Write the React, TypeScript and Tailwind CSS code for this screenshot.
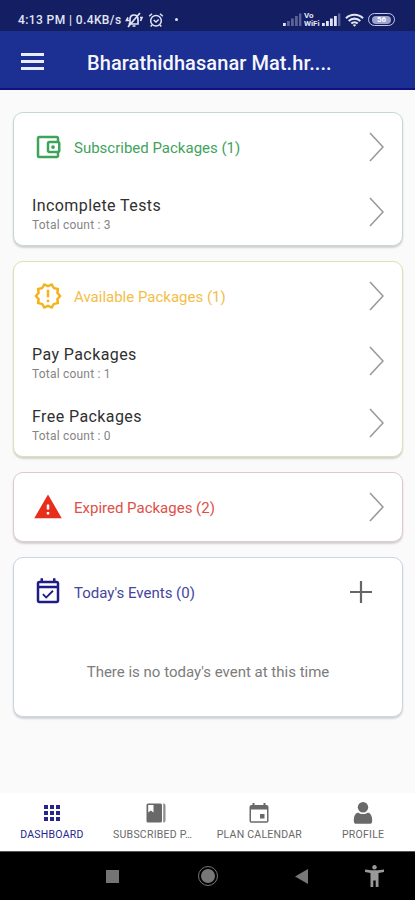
// src/App.tsx
import type { ReactNode } from 'react'
import {
  MdOutlineAccountBalanceWallet,
  MdOutlineNewReleases,
  MdWarning,
  MdOutlineEventAvailable,
} from 'react-icons/md'
import { clsx } from 'clsx'

function Chevron() {
  return (
    <svg className="h-[30px] w-[16px] shrink-0" viewBox="0 0 16 30" fill="none" stroke="#999999" strokeWidth="1.6">
      <path d="M2 1 15 15 2 29" />
    </svg>
  )
}

function Signal({ bars }: { bars: number }) {
  return (
    <svg className="h-[13px] w-[19px]" viewBox="0 0 19 13" fill="#dfe3f5">
      <rect x="0" y="10" width="2.8" height="3" />
      <rect x="4" y="8" width="2.8" height="5" opacity={bars > 1 ? 1 : 0.35} />
      <rect x="8" y="5.5" width="2.8" height="7.5" opacity={bars > 2 ? 1 : 0.35} />
      <rect x="12" y="3" width="2.8" height="10" opacity={bars > 3 ? 1 : 0.35} />
      <rect x="16" y="0.5" width="2.4" height="12.5" opacity="0.35" />
    </svg>
  )
}

function StatusBar() {
  return (
    <div className="flex h-[31px] shrink-0 items-center bg-[#141f63] pt-[8px] pl-[18px] text-[#e1e5f6]">
      <span className="w-[107px] whitespace-nowrap text-[12px] font-medium tracking-[0.4px]">4:13 PM | 0.4KB/s</span>
      {/* muted bell */}
      <svg className="h-[16px] w-[18px]" viewBox="0 0 18 16" fill="none" stroke="currentColor" strokeWidth="1.7">
        <path d="M5 12V7.500C5 4.500 6.500 3 9 3s4 1.500 4 4.500V12H3.500M7.500 14h3M15 1 3 15M3 5.500 1.500 8.500H4M15 5.500h2L15.500 9" />
      </svg>
      {/* alarm */}
      <svg className="ml-[5px] h-[16px] w-[16px]" viewBox="0 0 16 16" fill="none" stroke="currentColor" strokeWidth="1.5">
        <circle cx="8" cy="8.700" r="5.300" />
        <path d="m5.700 8 2.300 2 2.700-2.500M1.200 4.200 4 1.700M14.800 4.200 12 1.700M4 13l-1.300 1.500M12 13l1.300 1.500" />
      </svg>
      <span className="ml-[11px] h-[3px] w-[3px] rounded-full bg-current" />
      <div className="ml-auto flex items-center pr-[20px]">
        <Signal bars={1} />
        <span className="ml-[2px] flex w-[18px] flex-col text-[8px] font-bold leading-[8px]">
          <span>Vo</span>
          <span>WiFi</span>
        </span>
        <Signal bars={4} />
        <svg className="ml-[4px] h-[14px] w-[19px]" viewBox="0 0 19 14" fill="none" stroke="currentColor" strokeWidth="2.100">
          <path d="M1 5.200a12.200 12.200 0 0 1 17 0M3.700 8a8.300 8.300 0 0 1 11.600 0M6.300 10.600a4.600 4.600 0 0 1 6.400 0" />
          <path d="m7.800 12 1.700 1.800 1.700-1.800a2.400 2.400 0 0 0-3.400 0z" fill="currentColor" stroke="none" />
        </svg>
        <span className="ml-[4px] flex h-[13px] w-[27px] items-center justify-center rounded-full border-[1.500px] border-[#c3c9e6]">
          <span className="flex h-[8px] w-[19px] items-center justify-center rounded-full bg-[#9ba3cc] text-[8px] font-bold leading-none text-white">
            56
          </span>
        </span>
      </div>
    </div>
  )
}

function Header() {
  return (
    <header className="flex h-[59px] shrink-0 items-center border-b-2 border-[#11117f] bg-[#1c2f92] pl-[21px]">
      <div className="mt-[3px] flex w-[23px] flex-col gap-[4px]">
        <span className="h-[3px] bg-[#e9ecfa]" />
        <span className="h-[3px] bg-[#e9ecfa]" />
        <span className="h-[3px] bg-[#e9ecfa]" />
      </div>
      <h1 className="ml-[43px] pt-[6px] whitespace-nowrap text-[20px] font-medium tracking-[0.08px] text-[#f5f6fc]">
        Bharathidhasanar Mat.hr....
      </h1>
    </header>
  )
}

interface CardProps {
  icon: ReactNode
  title: string
  titleClass: string
  borderClass: string
  action?: ReactNode
  children?: ReactNode
}

function Card({ icon, title, titleClass, borderClass, action, children }: CardProps) {
  return (
    <section className={clsx('rounded-[10px] border bg-white shadow-[0_2px_2px_rgba(0,0,0,0.16)]', borderClass)}>
      <div className={clsx('flex h-[68px] items-center pr-[18px] pl-[18px]', titleClass)}>
        <span className="flex w-[31px] justify-center">{icon}</span>
        <h2 className="ml-[11px] pt-[2px] whitespace-nowrap text-[15px]">{title}</h2>
        <span className="ml-auto flex">{action ?? <Chevron />}</span>
      </div>
      {children}
    </section>
  )
}

function Row({ title, count }: { title: string; count: number }) {
  return (
    <div className="flex h-[62px] items-center justify-between pr-[18px] pl-[18px]">
      <div className="pt-[4px]">
        <p className="text-[16px] leading-[21px] tracking-[0.42px] text-[#303030]">{title}</p>
        <p className="text-[12px] leading-[18px] tracking-[0.2px] text-[#858585]">Total count : {count}</p>
      </div>
      <Chevron />
    </div>
  )
}

function BottomNav() {
  const tabs = [
    {
      label: 'DASHBOARD',
      active: true,
      icon: (
        <svg className="h-[18px] w-[18px]" viewBox="0 0 18 18" fill="currentColor">
          <path d="M1 1h4v4H1zM7 1h4v4H7zM13 1h4v4h-4zM1 7h4v4H1zM7 7h4v4H7zM13 7h4v4h-4zM1 13h4v4H1zM7 13h4v4H7zM13 13h4v4h-4z" />
        </svg>
      ),
    },
    {
      label: 'SUBSCRIBED P…',
      labelClass: 'mr-[6px]',
      icon: (
        <svg className="h-[20px] w-[20px]" viewBox="0 0 20 20" fill="currentColor">
          <path fillRule="evenodd" d="M2 .5h12.500a1.500 1.500 0 0 1 1.500 1.500v16a1.500 1.500 0 0 1-1.500 1.500H2A1.500 1.500 0 0 1 .5 18V2A1.500 1.500 0 0 1 2 .5zM2.200 2v7.500l2.600-2 2.700 2V2z" />
          <path d="M17.200.5a2 2 0 0 1 2.300 2v15a2 2 0 0 1-2.300 2z" opacity=".75" />
        </svg>
      ),
    },
    {
      label: 'PLAN CALENDAR',
      icon: (
        <svg className="h-[20px] w-[20px]" viewBox="0 0 20 20" fill="currentColor">
          <path fillRule="evenodd" d="M3.500 0h2v2h9V0h2v2h1A2 2 0 0 1 19.500 4v14a1.700 1.700 0 0 1-1.700 1.700H2.200A1.700 1.700 0 0 1 .5 18V4a2 2 0 0 1 2-2h1zM2 6.500v11.700h16V6.500z" />
          <rect x="11" y="11" width="4.500" height="4.500" />
        </svg>
      ),
    },
    {
      label: 'PROFILE',
      icon: (
        <svg className="h-[22px] w-[20px]" viewBox="0 0 20 22" fill="currentColor">
          <circle cx="10" cy="5.300" r="5.200" />
          <path d="M5 10.500c3 2 7 2 10 0 2.800.8 4.200 3.500 4.200 8.500 0 2-1 2.800-2.700 2.800h-13C1.800 21.800.8 21 .8 19c0-5 1.400-7.700 4.200-8.500z" />
        </svg>
      ),
    },
  ]

  return (
    <nav className="grid h-[58px] shrink-0 grid-cols-4 bg-white">
      {tabs.map(tab => (
        <div
          key={tab.label}
          className={clsx('flex flex-col items-center pt-[9px]', tab.active ? 'text-[#24258f]' : 'text-[#696969]')}
        >
          <span className="flex h-[22px] items-center">{tab.icon}</span>
          <span
            className={clsx(
              'mt-[4px] w-[87px] truncate text-center text-[10.500px] leading-[14px] tracking-[0.24px]',
              tab.labelClass,
            )}
          >
            {tab.label}
          </span>
        </div>
      ))}
    </nav>
  )
}

function SystemNav() {
  return (
    <div className="flex h-[49px] shrink-0 items-center border-t border-[#555] bg-black pl-[106px] text-[#777]">
      <span className="h-[13px] w-[13px] bg-[#747474]" />
      <span className="ml-[79px] flex h-[20px] w-[20px] items-center justify-center rounded-full border-[1.500px] border-[#777]">
        <span className="h-[14px] w-[14px] rounded-full bg-[#777]" />
      </span>
      <svg className="ml-[77px] h-[15px] w-[13px]" viewBox="0 0 13 15" fill="currentColor">
        <path d="M0 7.500 13 0v15z" />
      </svg>
      <svg className="ml-[57px] h-[22px] w-[19px]" viewBox="0 0 19 22" fill="#999">
        <circle cx="9.500" cy="2.200" r="2.200" />
        <path d="M0 4.500 6 5.300h7l6-.8v2.500l-5.500 1V22h-2.800v-6.500H8.300V22H5.500V8L0 7z" />
      </svg>
    </div>
  )
}

export default function App() {
  return (
    <div className="flex h-[900px] w-[415px] flex-col overflow-hidden bg-[#fafafa] font-[Roboto,sans-serif]">
      <StatusBar />
      <Header />

      <main className="flex flex-1 flex-col gap-[15px] pt-[22px] pr-[12px] pl-[13px]">
        <Card
          icon={<MdOutlineAccountBalanceWallet className="h-[30px] w-[30px]" />}
          title="Subscribed Packages (1)"
          titleClass="text-[#3fa35c]"
          borderClass="border-[#c5d9d4] pb-[2px]"
        >
          <Row title="Incomplete Tests" count={3} />
        </Card>

        <Card
          icon={<MdOutlineNewReleases className="h-[30px] w-[30px] text-[#f5b21a]" />}
          title="Available Packages (1)"
          titleClass="text-[#f3be48]"
          borderClass="border-[#dfe0b4] pb-[2px]"
        >
          <Row title="Pay Packages" count={1} />
          <Row title="Free Packages" count={0} />
        </Card>

        <Card
          icon={<MdWarning className="h-[30px] w-[30px] text-[#e62e1b]" />}
          title="Expired Packages (2)"
          titleClass="text-[#e04f48]"
          borderClass="border-[#e5c5cc]"
        />

        <Card
          icon={<MdOutlineEventAvailable className="h-[30px] w-[30px] text-[#1d1d85]" />}
          title="Today's Events (0)"
          titleClass="text-[#4445a0]"
          borderClass="border-[#ccd5e2]"
          action={
            <svg className="mr-[12px] h-[22px] w-[22px]" viewBox="0 0 22 22" stroke="#666" strokeWidth="2.200">
              <path d="M11 0v22M0 11h22" />
            </svg>
          }
        >
          <p className="flex h-[90px] items-center justify-center pt-[2px] text-[15px] text-[#7c7c7c]">
            There is no today's event at this time
          </p>
        </Card>
      </main>

      <BottomNav />
      <SystemNav />
    </div>
  )
}
